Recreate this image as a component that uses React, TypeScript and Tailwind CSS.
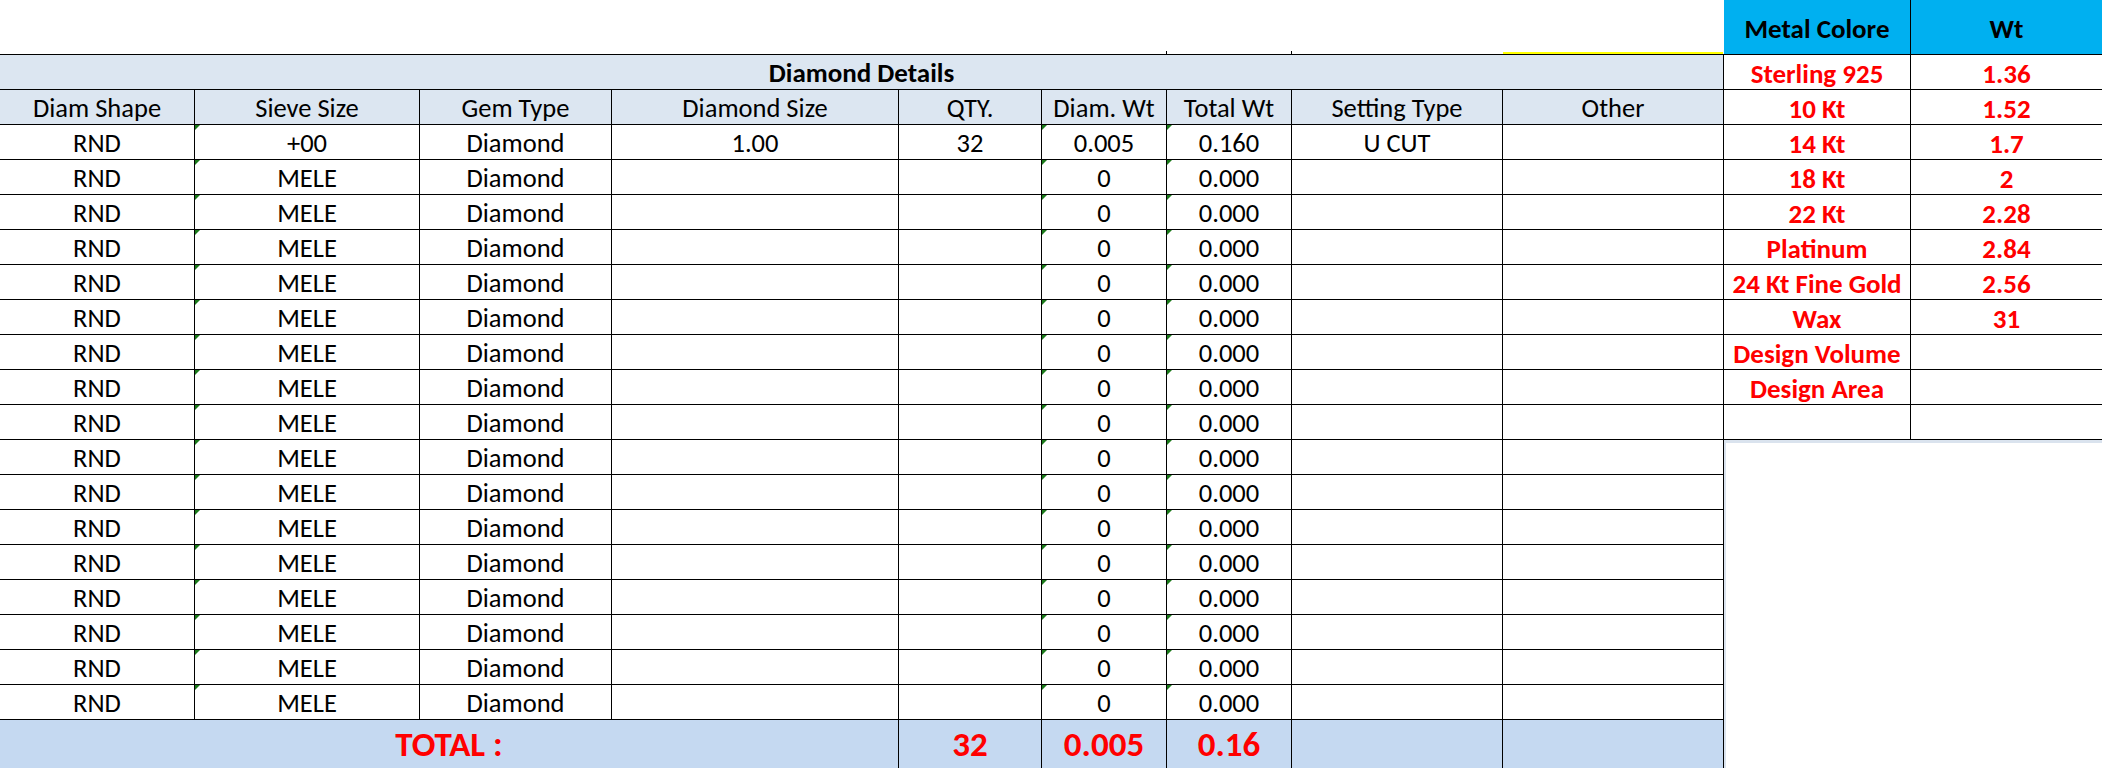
import React from "react";

const WCLS = [
  "w-[195px]",
  "w-[225px]",
  "w-[192px]",
  "w-[287px]",
  "w-[143px]",
  "w-[125px]",
  "w-[125px]",
  "w-[211px]",
  "w-[221px]",
];

const HEADERS = [
  "Diam Shape",
  "Sieve Size",
  "Gem Type",
  "Diamond Size",
  "QTY.",
  "Diam. Wt",
  "Total Wt",
  "Setting Type",
  "Other",
];

const rows: string[][] = [
  ["RND", "+00", "Diamond", "1.00", "32", "0.005", "0.160", "U CUT", ""],
  ...Array.from({ length: 16 }, () => ["RND", "MELE", "Diamond", "", "", "0", "0.000", "", ""]),
];

const metals: [string, string][] = [
  ["Sterling 925", "1.36"],
  ["10 Kt", "1.52"],
  ["14 Kt", "1.7"],
  ["18 Kt", "2"],
  ["22 Kt", "2.28"],
  ["Platinum", "2.84"],
  ["24 Kt Fine Gold", "2.56"],
  ["Wax", "31"],
  ["Design Volume", ""],
  ["Design Area", ""],
  ["", ""],
];

const TRI_COLS = new Set([1, 5, 6]);

function Tri() {
  return (
    <span className="absolute left-0 top-0 w-0 h-0 border-t-[5px] border-r-[5px] border-t-[#1a7a1a] border-r-transparent" />
  );
}

export default function App() {
  return (
    <div className="flex w-[2102px] h-[768px] overflow-hidden bg-white text-black font-[Calibri,Carlito,Lato,sans-serif]">
      {/* Left: diamond details */}
      <div className="w-[1724px] flex flex-col">
        <div className="h-[54px] flex items-end">
          <div className="w-[1166px]" />
          <div className="w-px h-[3px] bg-black" />
          <div className="w-[124px]" />
          <div className="w-px h-[3px] bg-black" />
          <div className="w-[211px]" />
          <div className="w-[220px] h-[2px] bg-[#ffff00]" />
        </div>
        <div className="h-[35px] border-t border-black bg-[#dce6f1] flex">
          <div className="w-[1724px] border-r border-black flex items-center justify-center font-bold text-[27px] leading-none">
            Diamond Details
          </div>
        </div>
        <div className="h-[35px] border-t border-black bg-[#dce6f1] flex">
          {HEADERS.map((h, i) => (
            <div
              key={i}
              className={`${WCLS[i]} border-r border-black flex items-center justify-center text-[26.5px] leading-none pt-[3px]`}
            >
              {h}
            </div>
          ))}
        </div>
        {rows.map((r, ri) => (
          <div key={ri} className="h-[35px] border-t border-black flex">
            {r.map((c, i) => (
              <div
                key={i}
                className={`${WCLS[i]} relative border-r border-black flex items-center justify-center text-[26.5px] leading-none pt-[3px]`}
              >
                {TRI_COLS.has(i) && <Tri />}
                {c}
              </div>
            ))}
          </div>
        ))}
        <div className="h-[49px] border-t border-black bg-[#c5d9f1] flex text-[#ff0000] font-bold text-[35px] leading-none">
          <div className="w-[899px] border-r border-black flex items-center justify-center pt-[1px]">TOTAL :</div>
          <div className="w-[143px] border-r border-black flex items-center justify-center pt-[1px]">32</div>
          <div className="w-[125px] border-r border-black flex items-center justify-center pt-[1px]">0.005</div>
          <div className="w-[125px] border-r border-black flex items-center justify-center pt-[1px]">0.16</div>
          <div className="w-[211px] border-r border-black" />
          <div className="w-[221px] border-r border-black" />
        </div>
      </div>

      {/* Right: metal table */}
      <div className="w-[378px] flex flex-col">
        <div className="h-[54px] bg-[#00b0f0] flex font-bold text-[27px] leading-none">
          <div className="w-[187px] border-r border-black flex items-center justify-center pt-[2px]">Metal Colore</div>
          <div className="flex-1 flex items-center justify-center pt-[2px]">Wt</div>
        </div>
        {metals.map(([m, w], i) => (
          <div
            key={i}
            className={`${i === metals.length - 1 ? "h-[36px] border-b" : "h-[35px]"} border-t border-black flex text-[#ff0000] font-bold text-[27px] leading-none`}
          >
            <div className="w-[187px] border-r border-black flex items-center justify-center pt-[3px]">{m}</div>
            <div className="flex-1 flex items-center justify-center pt-[3px]">{w}</div>
          </div>
        ))}
        <div className="flex-1 border-t-[3px] border-l-2 border-[#dae3ee]" />
      </div>
    </div>
  );
}
